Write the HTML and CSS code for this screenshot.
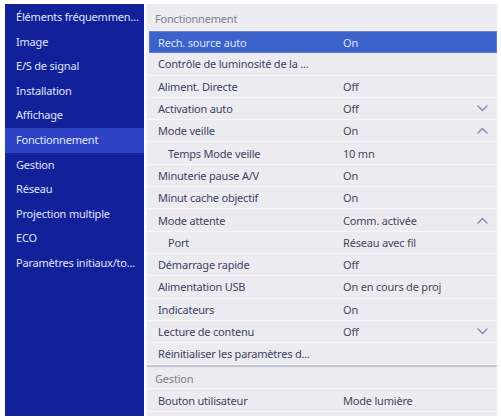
FILE: index.html
```html
<!DOCTYPE html>
<html lang="fr">
<head>
<meta charset="utf-8">
<link rel="stylesheet" href="styles.css">
</head>
<body>
<div class="screen">
  <nav class="sidebar">
    <div class="nav-item">Éléments fréquemmen...</div>
    <div class="nav-item">Image</div>
    <div class="nav-item">E/S de signal</div>
    <div class="nav-item">Installation</div>
    <div class="nav-item">Affichage</div>
    <div class="nav-item active">Fonctionnement</div>
    <div class="nav-item">Gestion</div>
    <div class="nav-item">Réseau</div>
    <div class="nav-item">Projection multiple</div>
    <div class="nav-item">ECO</div>
    <div class="nav-item">Paramètres initiaux/to...</div>
  </nav>
  <main class="panel">
    <div class="section-head first">Fonctionnement</div>
    <div class="row selected"><span class="label">Rech. source auto</span><span class="value">On</span></div>
    <div class="row"><span class="label">Contrôle de luminosité de la ...</span><span class="value"></span></div>
    <div class="row"><span class="label">Aliment. Directe</span><span class="value">Off</span></div>
    <div class="row"><span class="label">Activation auto</span><span class="value">Off</span>
      <svg class="chev" width="11" height="7" viewBox="0 0 11 7"><polyline points="1,1 5.5,5.5 10,1" /></svg></div>
    <div class="row"><span class="label">Mode veille</span><span class="value">On</span>
      <svg class="chev" width="11" height="7" viewBox="0 0 11 7"><polyline points="1,6 5.5,1.5 10,6" /></svg></div>
    <div class="row sub"><span class="label">Temps Mode veille</span><span class="value">10 mn</span></div>
    <div class="row"><span class="label">Minuterie pause A/V</span><span class="value">On</span></div>
    <div class="row"><span class="label">Minut cache objectif</span><span class="value">On</span></div>
    <div class="row"><span class="label">Mode attente</span><span class="value">Comm. activée</span>
      <svg class="chev" width="11" height="7" viewBox="0 0 11 7"><polyline points="1,6 5.5,1.5 10,6" /></svg></div>
    <div class="row sub"><span class="label">Port</span><span class="value">Réseau avec fil</span></div>
    <div class="row"><span class="label">Démarrage rapide</span><span class="value">Off</span></div>
    <div class="row"><span class="label">Alimentation USB</span><span class="value">On en cours de proj</span></div>
    <div class="row"><span class="label">Indicateurs</span><span class="value">On</span></div>
    <div class="row"><span class="label">Lecture de contenu</span><span class="value">Off</span>
      <svg class="chev" width="11" height="7" viewBox="0 0 11 7"><polyline points="1,1 5.5,5.5 10,1" /></svg></div>
    <div class="row"><span class="label">Réinitialiser les paramètres d...</span><span class="value"></span></div>
    <div class="section-head second">Gestion</div>
    <div class="row"><span class="label">Bouton utilisateur</span><span class="value">Mode lumière</span></div>
  </main>
</div>
</body>
</html>
```
FILE: styles.css
```css
* { box-sizing: border-box; }
html, body { margin: 0; padding: 0; background: #ffffff; }
body {
  font-family: "Noto Sans", "Open Sans", sans-serif;
  font-size: 11px;
  width: 501px;
  height: 420px;
  overflow: hidden;
}
.screen {
  display: flex;
  height: 420px;
  padding: 4px 4px 4px 5px;
}
.sidebar {
  width: 139px;
  flex: none;
  background: #12219a;
  display: flex;
  flex-direction: column;
  padding-top: 1px;
}
.nav-item {
  height: 24.6px;
  line-height: 24.6px;
  padding-left: 11px;
  color: #e1e5fb;
  white-space: nowrap;
  letter-spacing: -0.2px;
}
.nav-item.active {
  background: #2d43c4;
}
.panel {
  flex: 1;
  margin-left: 2px;
  background: #ececf0;
  display: flex;
  flex-direction: column;
  border-left: 1px solid #f6f6f8;
}
.section-head {
  color: #7d7e86;
  padding-left: 8px;
  letter-spacing: -0.2px;
}
.section-head.first {
  height: 27px;
  line-height: 27px;
  padding-top: 1px;
  border-bottom: 1px solid #f7f7f9;
}
.section-head.second {
  height: 24px;
  line-height: 23px;
  border-top: 2px solid #c3c3cb;
  border-bottom: 1px solid #f7f7f9;
}
.row {
  height: 22.3px;
  display: flex;
  align-items: center;
  border-bottom: 1px solid #f7f7f9;
  color: #3e4163;
  letter-spacing: -0.2px;
}
.row .label {
  width: 185px;
  padding-left: 11px;
  white-space: nowrap;
  flex: none;
}
.row.sub .label {
  padding-left: 21px;
}
.row .value {
  flex: 1;
  padding-left: 11px;
  color: #45475a;
  white-space: nowrap;
}
.row.selected {
  background: #3b61ca;
  color: #dbe4ff;
  margin-left: 2px;
  border: 1px solid #5d7fd9;
}
.row.selected .label { padding-left: 8px; width: 182px; }
.row.selected .value { color: #dbe4ff; }
.chev {
  flex: none;
  margin-right: 9px;
}
.chev polyline {
  fill: none;
  stroke: #8d92c6;
  stroke-width: 1.6;
  stroke-linecap: round;
  stroke-linejoin: round;
}
```
